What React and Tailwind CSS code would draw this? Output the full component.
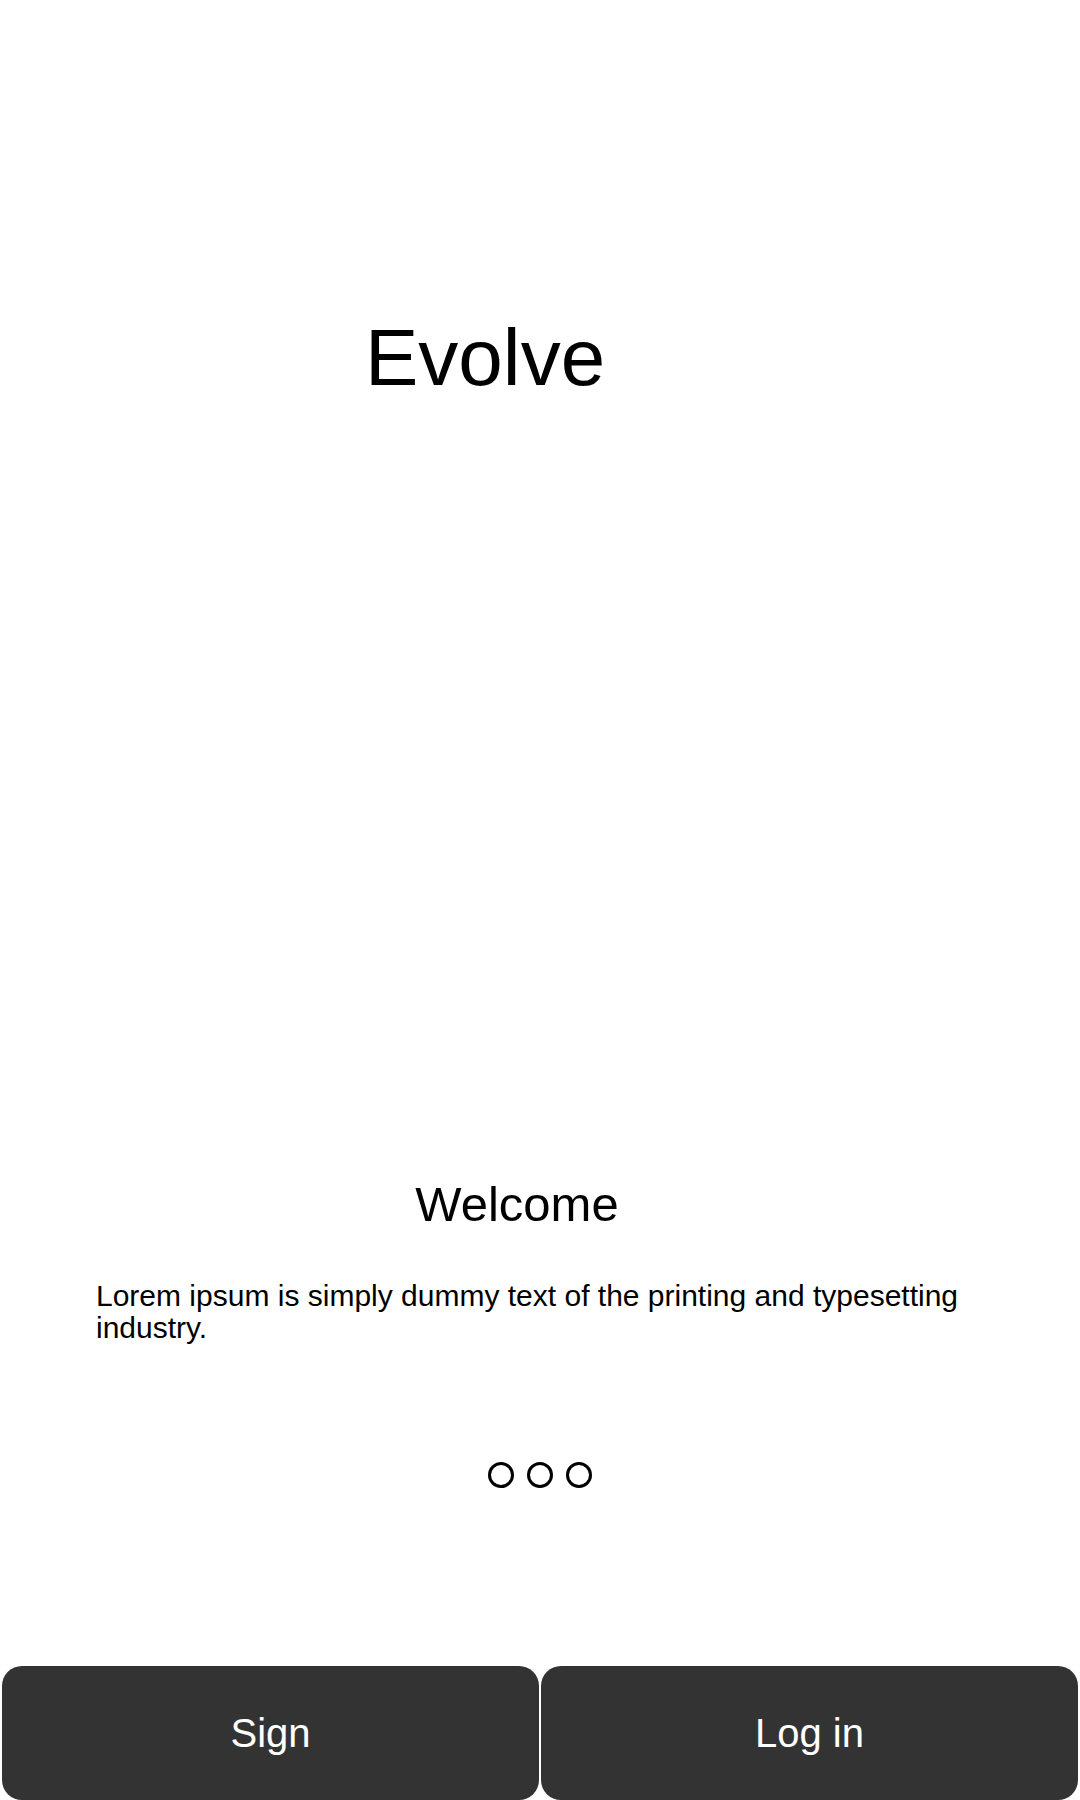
import React from "react";

function Dots() {
  return (
    <div className="flex justify-center gap-[13px]">
      <span className="w-[26px] h-[26px] rounded-full border-[3px] border-black" />
      <span className="w-[26px] h-[26px] rounded-full border-[3px] border-black" />
      <span className="w-[26px] h-[26px] rounded-full border-[3px] border-black" />
    </div>
  );
}

export default function App() {
  return (
    <div
      className="w-[1080px] h-[1800px] bg-white flex flex-col text-black"
      style={{ fontFamily: '"Liberation Sans", Arial, sans-serif' }}
    >
      {/* logo */}
      <div className="pt-[318px] pl-[365px]">
        <h1 className="text-[80px] leading-none">Evolve</h1>
      </div>

      {/* intro */}
      <div className="mt-[782px] ml-[96px] w-[900px]">
        <h2 className="w-[842px] text-[49px] leading-none text-center">Welcome</h2>
        <p className="mt-[51px] text-[30px] leading-[32px]">
          Lorem ipsum is simply dummy text of the printing and typesetting
          industry.
        </p>
      </div>

      <div className="mt-[118px]">
        <Dots />
      </div>

      {/* actions */}
      <div className="mt-[178px] flex gap-[2px] px-[2px] pb-[1px]">
        <button className="flex-1 h-[134px] rounded-[20px] bg-[#333333] text-white text-[40px]">
          Sign
        </button>
        <button className="flex-1 h-[134px] rounded-[20px] bg-[#333333] text-white text-[40px]">
          Log in
        </button>
      </div>
    </div>
  );
}
